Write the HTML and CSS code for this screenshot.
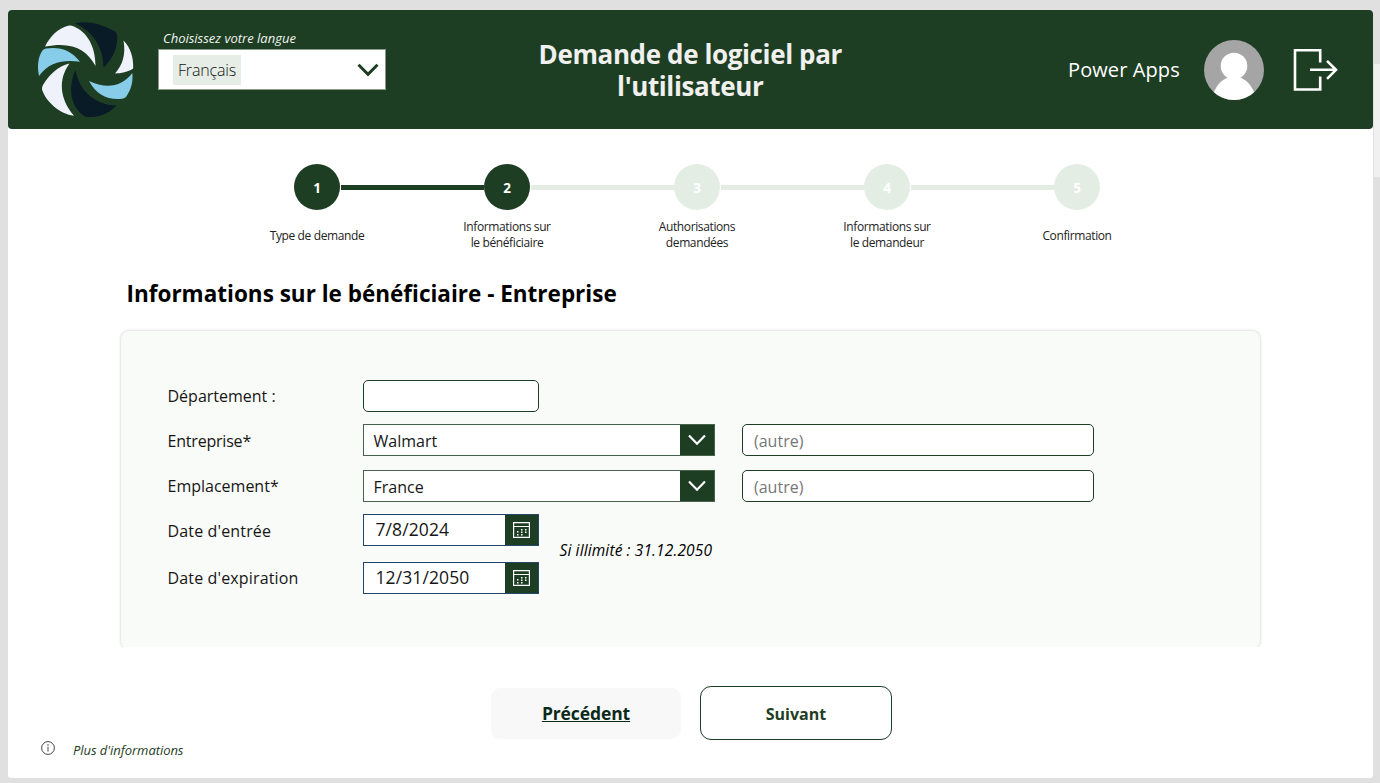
FILE: index.html
```html
<!DOCTYPE html>
<html lang="fr">
<head>
<meta charset="utf-8">
<title>Demande de logiciel par l'utilisateur</title>
<link rel="stylesheet" href="styles.css">
</head>
<body>
<div class="shell">
<main class="app">
  <header class="header">
    <svg class="logo" viewBox="37 21 97 98">
      <path fill="#eff2fb" d="M45 46.500C50 36.500 58 28.500 68 25.800Q71 25.200 74 26.500C87 32 95.500 46 95.500 66C87 50 73 41 45 46.500Z"/>
      <path fill="#091b26" d="M75 23.200C87 20.500 101 23.500 115 31.500Q117.500 33 117.300 37C117 49 113 59 103.500 67.500C103 46 93 32 75 23.200Z"/>
      <path fill="#eff2fb" d="M123.500 40.500C131 48 133.500 58 133.200 68.500C128 72 121 73.300 115 73.500C122.500 65 126 55 123.500 40.500Z"/>
      <path fill="#87cce8" d="M132.300 73C133.300 82 131 90 126 97Q124 99 120 99C105 99.500 96 93.500 89 81C106 89 122 87 132.300 73Z"/>
      <path fill="#091b26" d="M75.500 70C79 90 94 105 116.500 105.500C109 113 101 117 92 117H87Q85.500 117 84 116C69 105 68.500 86 75.500 70Z"/>
      <path fill="#eff2fb" d="M69.500 63.500C58 79 59.500 99 74 115.800C60 114 46 102 42 89.500Q41.500 87.500 43 85C49 75 58 66 69.500 63.500Z"/>
      <path fill="#87cce8" d="M80 61.800C64 59.500 49 62 39 76C37 66 38 57 42.500 50.500Q43.500 49 46 48.500C60 46.500 71 50 80 61.800Z"/>
    </svg>
    <div class="language">
      <div class="language-label"><span>Choisissez votre langue</span></div>
      <div class="language-select">
        <span class="language-tag">Français</span>
        <svg class="language-chevron" viewBox="0 0 22 14"><path d="M1.500 1.800L11 11.300L20.500 1.800" fill="none" stroke="#1e3e24" stroke-width="3"/></svg>
      </div>
    </div>
    <h1 class="title">Demande de logiciel par<br>l'utilisateur</h1>
    <div class="user">
      <span class="user-name">Power Apps</span>
      <svg class="avatar" viewBox="0 0 60 60">
        <clipPath id="disc"><circle cx="30" cy="30" r="30"/></clipPath>
        <g clip-path="url(#disc)"><rect width="60" height="60" fill="#a5a5a5"/>
        <circle cx="30" cy="26" r="13.300" fill="#fff"/>
        <path d="M8 60C10 47 17 40 24 37.500H36C43 40 50 47 52 60Z" fill="#fff"/></g>
      </svg>
      <svg class="exit" viewBox="0 0 45 44"><g fill="none" stroke="#fff" stroke-width="2.600"><path d="M27.200 14.500V2.300H2V41.500H27.200V28.500"/><path d="M17 21.800H42.500M34 12.800L43 21.800L34 30.800"/></g></svg>
    </div>
  </header>

  <ol class="steps">
    <li class="step done"><span class="dot">1</span><span class="step-label single">Type de demande</span></li>
    <li class="step current"><span class="dot">2</span><span class="step-label">Informations sur<br>le bénéficiaire</span></li>
    <li class="step"><span class="dot">3</span><span class="step-label">Authorisations<br>demandées</span></li>
    <li class="step"><span class="dot">4</span><span class="step-label">Informations sur<br>le demandeur</span></li>
    <li class="step"><span class="dot">5</span><span class="step-label single">Confirmation</span></li>
  </ol>

  <h2 class="heading"><span>Informations sur le bénéficiaire - Entreprise</span></h2>

  <div class="card-clip">
  <section class="card">
    <div class="row row-department"><span class="label">Département :</span><div class="input short"></div></div>
    <div class="row row-company">
      <span class="label">Entreprise*</span>
      <div class="select"><span class="value">Walmart</span><span class="arrow"><svg viewBox="0 0 18 12"><path d="M1 1.500L9 9.700L17 1.500" fill="none" stroke="#fff" stroke-width="2.200"/></svg></span></div>
      <div class="input other">(autre)</div>
    </div>
    <div class="row row-location">
      <span class="label">Emplacement*</span>
      <div class="select"><span class="value">France</span><span class="arrow"><svg viewBox="0 0 18 12"><path d="M1 1.500L9 9.700L17 1.500" fill="none" stroke="#fff" stroke-width="2.200"/></svg></span></div>
      <div class="input other">(autre)</div>
    </div>
    <div class="dates">
      <div class="date-rows">
        <div class="row row-start"><span class="label">Date d'entrée</span><div class="date"><span class="date-value">7/8/2024</span><span class="calendar"><svg viewBox="0 0 17 16"><path d="M.6.600H16.400V15.400H.6ZM.6 4.500H16.400" fill="none" stroke="#fff" stroke-width="1.200"/><path d="M8 7h1.500v1.500H8zM12 7h1.500v1.500H12zM4 9h1.500v1.500H4zM8 9.500h1.500V11H8zM12 9.500h1.500V11H12zM4 12h1.500v1.500H4zM8 12h1.500v1.500H8z" fill="#fff"/></svg></span></div></div>
        <div class="row row-end"><span class="label">Date d'expiration</span><div class="date"><span class="date-value">12/31/2050</span><span class="calendar"><svg viewBox="0 0 17 16"><path d="M.6.600H16.400V15.400H.6ZM.6 4.500H16.400" fill="none" stroke="#fff" stroke-width="1.200"/><path d="M8 7h1.500v1.500H8zM12 7h1.500v1.500H12zM4 9h1.500v1.500H4zM8 9.500h1.500V11H8zM12 9.500h1.500V11H12zM4 12h1.500v1.500H4zM8 12h1.500v1.500H8z" fill="#fff"/></svg></span></div></div>
      </div>
      <span class="note">Si illimité : 31.12.2050</span>
    </div>
  </section>
  </div>

  <div class="actions">
    <div class="button previous"><span>Précédent</span></div>
    <div class="button next"><span>Suivant</span></div>
  </div>
  <footer class="more">
    <svg class="info" viewBox="0 0 14 14"><circle cx="7" cy="7" r="6.400" fill="none" stroke="#444" stroke-width="1"/><path d="M6.400 3.300h1.200v1.200H6.400zM6.500 5.800h1v4.700h-1z" fill="#444"/></svg>
    <span class="more-text">Plus d'informations</span>
  </footer>
</main>
<div class="rail"><div class="thumb"></div></div>
</div>
</body>
</html>
```
FILE: styles.css
```css
* { box-sizing: border-box; }
body { margin: 0; background: #e0e0e0; font-family: "Open Sans", "Noto Sans", sans-serif; color: #000; }
.shell { display: flex; width: 1380px; height: 783px; overflow: hidden; }
.app { display: flex; flex-direction: column; width: 1365px; height: 768px; margin: 10px 0 0 8px; background: #fff; border-radius: 3px; flex: none; }
.rail { width: 6px; margin-left: 1px; padding-top: 64px; }
.thumb { height: 113px; background: #f0f0f0; }
h1, h2, ol { margin: 0; padding: 0; }
span { white-space: nowrap; }

.header { display: grid; grid-template-columns: 149.500px 300px 465.500px 1fr; height: 119px; background: #1e3e24; border-radius: 4px; flex: none; }
.logo { width: 97px; height: 98px; margin: 11px 0 0 29px; }
.language { width: 228px; padding-top: 19px; }
.language-label { height: 20px; padding-left: 5.500px; font-size: 13px; line-height: 19px; font-style: italic; color: #f0f3ee; }
.language-select { display: flex; align-items: center; justify-content: space-between; height: 41px; background: #fff; border: 1px solid #8a9b8c; padding: 0 6px 0 14.500px; }
.language-tag { height: 30px; padding: 0 5px; line-height: 30px; background: #e6ede6; font-size: 16px; font-weight: 300; color: #111; letter-spacing: -.17px; }
.language-chevron { width: 22px; height: 14px; }
.title { padding-top: 28px; text-align: center; font-size: 26px; line-height: 32px; font-weight: 700; color: #f0f0ee; letter-spacing: -.38px; }
.user { display: flex; padding-left: 145px; padding-top: 29.500px; }
.user-name { width: 136px; font-size: 20px; line-height: 60px; color: #fff; letter-spacing: .1px; }
.avatar { width: 60px; height: 60px; margin-right: 29px; }
.exit { width: 45px; height: 44px; margin-top: 8px; }

.steps { display: grid; grid-template-columns: repeat(5, 190px); margin: 34.500px 0 0 214px; height: 88px; list-style: none; flex: none; }
.step { position: relative; display: flex; flex-direction: column; align-items: center; }
.dot { width: 46px; height: 46px; border-radius: 50%; background: #e4ede4; color: #fff; font-size: 13.500px; font-weight: 700; line-height: 48px; text-align: center; }
.done .dot, .current .dot { background: #1e3e24; }
.step:not(:last-child)::after { content: ""; position: absolute; left: 119px; top: 21px; width: 143px; height: 5px; background: #e4ede4; }
.step.done::after { background: #1e3e24; }
.step-label { display: flex; align-items: center; height: 32px; margin-top: 9.500px; font-size: 12px; line-height: 16px; text-align: center; color: #222; letter-spacing: -.38px; }
.step-label.single { margin-top: 10.500px; }

.heading { height: 36px; margin: 24px 0 0 118.500px; font-size: 22.500px; line-height: 36px; font-weight: 700; flex: none; }
.card-clip { margin: 13px 0 0 103px; padding: 6px 10px 0; width: 1160px; height: 322.500px; overflow: hidden; flex: none; }
.card { height: 318px; background: #f9fbf8; border-radius: 8px; box-shadow: 0 0 3px rgba(0, 0, 0, .24); padding: 49px 0 0 46px; width: 1139px; }
.row { display: flex; height: 32px; }
.label { width: 196px; padding-left: .5px; font-size: 16px; line-height: 32px; color: #161616; }
.input { height: 32px; background: #fff; border: 1px solid #1e3e24; border-radius: 5px; }
.short { width: 176px; }
.other { width: 352px; margin-left: 27.500px; padding-left: 11px; font-size: 16px; line-height: 32px; color: #777; }
.select { display: flex; justify-content: space-between; width: 351.500px; background: #fff; border: 1px solid #48624c; }
.value { padding-left: 9.500px; font-size: 16px; line-height: 32px; color: #161616; }
.arrow { display: flex; align-items: center; justify-content: center; width: 34px; background: #1e3e24; }
.arrow svg { width: 18px; height: 12px; }
.row-company { margin-top: 12.500px; }
.row-company .label { line-height: 34px; letter-spacing: -.2px; }
.row-location { margin-top: 13.500px; }
.dates { display: flex; margin-top: 12px; }
.dates .label { letter-spacing: .15px; }
.row-start .label { line-height: 34px; }
.row-end { margin-top: 16px; }
.date { display: flex; justify-content: space-between; width: 176px; background: #fff; border: 1px solid #24466b; }
.date-value { padding-left: 11.500px; font-size: 17.500px; line-height: 29px; color: #161616; letter-spacing: .1px; }
.row-end .date-value { line-height: 28px; }
.calendar { display: flex; align-items: center; justify-content: center; width: 33px; background: #1e3e24; }
.calendar svg { width: 17px; height: 16px; }
.note { margin: 20px 0 0 20.500px; font-size: 15.500px; line-height: 32px; font-style: italic; letter-spacing: .12px; }

.actions { display: flex; gap: 19px; margin: 39px 0 0 483px; height: 54px; flex: none; }
.button { display: flex; align-items: center; justify-content: center; font-weight: 700; color: #1e3e24; }
.previous { width: 190px; height: 51px; margin-top: 1.500px; border-radius: 9px; background: #f8f8f8; font-size: 17.500px; color: #0b2a1a; text-decoration: underline; letter-spacing: -.1px; }
.next { width: 192px; height: 54px; padding-top: 1.500px; border: 1px solid #1e3e24; border-radius: 11px; font-size: 16px; }
.more { display: flex; margin: 1px 0 0 33px; }
.info { width: 14px; height: 14px; }
.more-text { margin-left: 18px; font-size: 13px; line-height: 18px; font-style: italic; color: #1e3e24; letter-spacing: -.05px; }
```
